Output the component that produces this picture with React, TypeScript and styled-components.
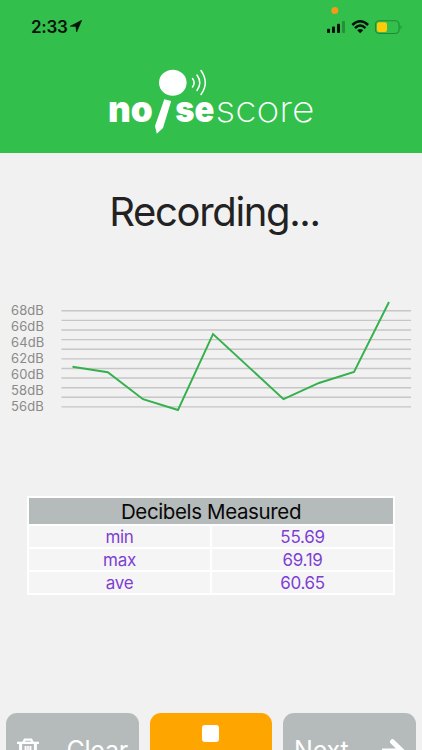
import React from 'react';
import styled, { createGlobalStyle } from 'styled-components';

const GlobalStyle = createGlobalStyle`
  * { box-sizing: border-box; }
  body { margin: 0; background: #f1f1f1; }
`;

const Screen = styled.main`
  width: 422px;
  height: 750px;
  overflow: hidden;
  display: flex;
  flex-direction: column;
  background: #f1f1f1;
  font-family: Inter, 'Liberation Sans', sans-serif;
  font-feature-settings: 'calt' 0;
`;

const Header = styled.header`
  height: 153px;
  flex: none;
  background: #33bf4c;
`;

const StatusBar = styled.div`
  height: 60px;
  display: flex;
  justify-content: space-between;
  padding: 0 20px 0 31px;
`;

const Clock = styled.div`
  display: flex;
  gap: 3px;
  padding-top: 17px;
  font-size: 17px;
  line-height: 21px;
  font-weight: 600;
  letter-spacing: -0.3px;
  color: #06130a;

  svg { margin-top: 3px; }
`;

const LogoArt = styled.svg`
  display: block;
  margin: 0 auto;
`;

const Title = styled.h1`
  margin: 34px 0 0;
  height: 50px;
  padding-left: 7px;
  line-height: 50px;
  font-size: 40px;
  font-weight: 400;
  letter-spacing: -1.35px;
  text-align: center;
  color: #222;
`;

const ChartPanel = styled.section`
  display: flex;
  height: 120px;
  margin-top: 60px;
`;

const Scale = styled.div`
  width: 61px;
  padding: 5px 0 0 11px;
  font-size: 13px;
  line-height: 16px;
  letter-spacing: 0.1px;
  color: #8a8a8a;
`;

const Plot = styled.svg`
  display: block;
  flex: none;
`;

const Table = styled.div`
  display: grid;
  grid-template-columns: 181px 181px;
  grid-template-rows: 26px repeat(3, 21px);
  gap: 2px;
  width: 368px;
  margin: 79px 0 0 27px;
  padding: 2px;
  background: #fff;
`;

const TableHeading = styled.div`
  grid-column: 1 / -1;
  background: #b5bbbb;
  color: #080808;
  text-align: center;
  font-size: 20.5px;
  line-height: 27px;
  letter-spacing: -0.37px;
`;

const Cell = styled.div`
  background: #f5f5f5;
  color: #7d3fd3;
  text-align: center;
  font-size: 17px;
  line-height: 22px;
  letter-spacing: -0.3px;
`;

const Actions = styled.footer`
  display: grid;
  grid-template-columns: 133px 122px 133px;
  gap: 11px;
  padding: 0 6px;
  margin-top: 118px;
`;

const ActionButton = styled.button<{ $tone: string; $align?: string }>`
  display: flex;
  align-items: flex-start;
  justify-content: ${p => p.$align ?? 'space-between'};
  height: 68px;
  padding: 12px 11px 0;
  border: 0;
  border-radius: 11px;
  background: ${p => p.$tone};
  color: #fff;
  font: 400 25px/50px Inter, sans-serif;
`;

const ActionLabel = styled.span`
  line-height: 51px;
  letter-spacing: -0.2px;
`;

const StopMark = styled.span`
  width: 17px;
  height: 17px;
  margin-right: 1px;
  border-radius: 3px;
  background: #fff;
`;

const labels = [68, 66, 64, 62, 60, 58, 56];
const measurements = [['min', '55.69'], ['max', '69.19'], ['ave', '60.65']];

const StatusIcons = () => (
  <svg width="88" height="40" viewBox="314 0 88 40">
    <circle cx="334.8" cy="10.5" r="3.5" fill="#f39a19" />
    <g fill="#06130a">
      <rect x="327" y="28.7" width="3" height="4.3" rx=".8" />
      <rect x="332" y="26.5" width="3" height="6.5" rx=".8" />
      <rect x="337" y="23.8" width="3" height="9.2" rx=".8" />
      <rect x="342" y="21" width="3" height="12" rx=".8" opacity=".28" />
      <path d="M357.2 30.2Q360.2 27.6 363.2 30.2L360.2 33.2Z" />
    </g>
    <g fill="none" stroke="#06130a" strokeWidth="2.5">
      <path d="M352.3 25Q360.2 17.6 368.1 25" />
      <path d="M355 28.2Q360.2 23 365.4 28.2" />
    </g>
    <rect x="375.5" y="20.7" width="23.6" height="12.8" rx="3.7" fill="none" stroke="#208b38" strokeWidth="1.1" />
    <rect x="377" y="22.2" width="10" height="9.8" rx="2" fill="#fecb08" />
    <path d="M400.6 25q2 2.2 0 4.4z" fill="#208b38" />
  </svg>
);

const Logo = () => (
  <LogoArt width="222" height="80" viewBox="100 60 222 80" fill="#fff" fontFamily="Inter, sans-serif">
    <ellipse cx="172.8" cy="82.7" rx="13.8" ry="13" />
    <g fill="none" stroke="#fff" strokeWidth="1.5" strokeLinecap="round">
      <path d="M192.5 78.5Q195.8 82.7 192.5 87" />
      <path d="M197 75Q202.5 82.7 197 90.5" />
      <path d="M201 70.5Q209.5 82.7 201 94.5" />
    </g>
    <path d="M164.3 99.2L171.2 101L163 128L156.8 133.8L155 126Z" />
    <text x="108" y="122" fontSize="35.5" fontWeight="900" textLength="44.8" lengthAdjust="spacingAndGlyphs">no</text>
    <text x="175.2" y="122" fontSize="35.5" fontWeight="900" textLength="39" lengthAdjust="spacingAndGlyphs">se</text>
    <text x="215.5" y="122.3" fontSize="36" fontWeight="200" textLength="99" lengthAdjust="spacingAndGlyphs">score</text>
  </LogoArt>
);

export default function App() {
  return (
    <Screen>
      <GlobalStyle />
      <Header>
        <StatusBar>
          <Clock>
            <span>2:33</span>
            <svg width="12" height="12" viewBox="0 0 12 12"><path d="M.3 6.2L11.7.3L6.6 12L5.9 6.4Z" fill="#06130a" stroke="#06130a" strokeWidth=".6" strokeLinejoin="round" /></svg>
          </Clock>
          <StatusIcons />
        </StatusBar>
        <Logo />
      </Header>
      <Title>Recording...</Title>
      <ChartPanel>
        <Scale>{labels.map(value => <div key={value}>{value}dB</div>)}</Scale>
        <Plot width="350" height="120" viewBox="61 297 350 120">
          {Array.from({ length: 11 }, (_, i) => (
            <path key={i} d={`M61.5 ${310.8 + i * 9.61}H411`} stroke="#c6c6c6" strokeWidth="1.4" />
          ))}
          <polyline
            points="72.5,366.7 107.8,372.2 143,399.2 178,410 213,334 283.5,399.2 319,383 354,372 389,302"
            fill="none" stroke="#34b04c" strokeWidth="1.9"
          />
        </Plot>
      </ChartPanel>
      <Table>
        <TableHeading>Decibels Measured</TableHeading>
        {measurements.map(([name, value]) => (
          <React.Fragment key={name}>
            <Cell>{name}</Cell>
            <Cell>{value}</Cell>
          </React.Fragment>
        ))}
      </Table>
      <Actions>
        <ActionButton $tone="#b5bbbb">
          <svg width="22" height="40" viewBox="0 0 22 40">
            <g transform="translate(0 13)" fill="none" stroke="#fff" strokeWidth="2.4">
              <path d="M0 4.9H22M6.3 4.5L7.8 1.6H14.2L15.7 4.5" />
              <path d="M3.6 4.5V21H18.4V4.5" strokeWidth="3" />
              <path d="M8.6 8V18M13.4 8V18" strokeWidth="2" />
              <path d="M11 8V18" strokeWidth="1.6" />
            </g>
          </svg>
          <ActionLabel>Clear</ActionLabel>
        </ActionButton>
        <ActionButton $tone="#ffa500" $align="center"><StopMark /></ActionButton>
        <ActionButton $tone="#b5bbbb">
          <ActionLabel>Next</ActionLabel>
          <svg width="23" height="40" viewBox="0 0 23 40">
            <path d="M0 26H20M10.5 16.7L20 26L10.5 35.3" fill="none" stroke="#fff" strokeWidth="5" strokeLinecap="round" />
          </svg>
        </ActionButton>
      </Actions>
    </Screen>
  );
}
